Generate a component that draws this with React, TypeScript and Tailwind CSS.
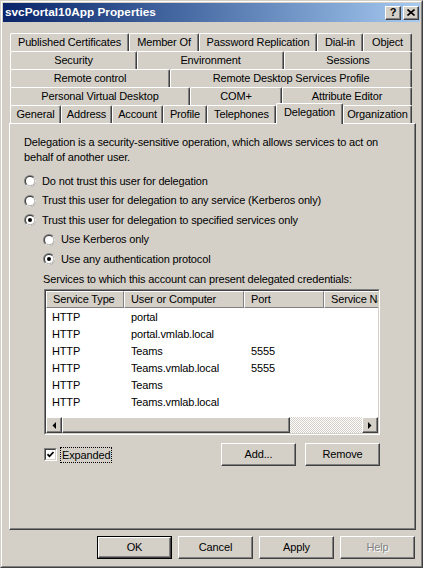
import React from "react";

type TabDef = { label: string; w: string; selected?: boolean };

const rows: TabDef[][] = [
  [
    { label: "Published Certificates", w: "w-[119px]" },
    { label: "Member Of", w: "w-[70px]" },
    { label: "Password Replication", w: "w-[118px]" },
    { label: "Dial-in", w: "w-[46px]" },
    { label: "Object", w: "w-[49px]" },
  ],
  [
    { label: "Security", w: "w-[127px]" },
    { label: "Environment", w: "w-[147px]" },
    { label: "Sessions", w: "w-[128px]" },
  ],
  [
    { label: "Remote control", w: "w-[160px]" },
    { label: "Remote Desktop Services Profile", w: "w-[242px]" },
  ],
  [
    { label: "Personal Virtual Desktop", w: "w-[180px]" },
    { label: "COM+", w: "w-[92px]" },
    { label: "Attribute Editor", w: "w-[130px]" },
  ],
  [
    { label: "General", w: "w-[51px]" },
    { label: "Address", w: "w-[51px]" },
    { label: "Account", w: "w-[51px]" },
    { label: "Profile", w: "w-[44px]" },
    { label: "Telephones", w: "w-[69px]" },
    { label: "Delegation", w: "w-[67px]", selected: true },
    { label: "Organization", w: "w-[69px]" },
  ],
];

const services = [
  ["HTTP", "portal", ""],
  ["HTTP", "portal.vmlab.local", ""],
  ["HTTP", "Teams", "5555"],
  ["HTTP", "Teams.vmlab.local", "5555"],
  ["HTTP", "Teams", ""],
  ["HTTP", "Teams.vmlab.local", ""],
];

const raised =
  "border border-t-white border-l-white border-b-[#404040] border-r-[#404040] bg-[#d4d0c8] shadow-[inset_-1px_-1px_0_#808080]";

function Radio({ checked }: { checked?: boolean }) {
  return (
    <svg width="12" height="12" viewBox="0 0 12 12" className="shrink-0">
      <circle cx="6" cy="6" r="6" fill="#808080" />
      <path d="M10.24 1.76 A6 6 0 0 1 1.76 10.24 Z" fill="#ffffff" />
      <circle cx="6" cy="6" r="5" fill="#404040" />
      <path d="M9.54 2.46 A5 5 0 0 1 2.46 9.54 Z" fill="#d4d0c8" />
      <circle cx="6" cy="6" r="4" fill="#ffffff" />
      {checked && <circle cx="6" cy="6" r="2" fill="#000000" />}
    </svg>
  );
}

function RadioRow({ label, checked, sub }: { label: string; checked?: boolean; sub?: boolean }) {
  return (
    <div className={`flex h-[16px] items-center gap-[6px] ${sub ? "ml-[19px]" : ""}`}>
      <Radio checked={checked} />
      <span>{label}</span>
    </div>
  );
}

function Button({ label, className = "", disabled, isDefault }: { label: string; className?: string; disabled?: boolean; isDefault?: boolean }) {
  const inner = (
    <div
      className={`flex h-full w-full items-center justify-center ${raised} ${
        disabled ? "text-[#808080] [text-shadow:1px_1px_0_#ffffff]" : ""
      }`}
    >
      {label}
    </div>
  );
  if (isDefault) {
    return <div className={`border border-black ${className}`}>{inner}</div>;
  }
  return <div className={className}>{inner}</div>;
}

function Arrow({ dir }: { dir: "left" | "right" }) {
  return (
    <div className={`flex h-[16px] w-[16px] shrink-0 items-center justify-center ${raised}`}>
      <svg width="4" height="7" viewBox="0 0 4 7">
        {dir === "left" ? <path d="M4 0 V7 L0.5 3.5 Z" fill="#000" /> : <path d="M0 0 V7 L3.5 3.5 Z" fill="#000" />}
      </svg>
    </div>
  );
}

export default function App() {
  return (
    <div className="h-[568px] w-[423px] border border-t-[#d4d0c8] border-l-[#d4d0c8] border-b-[#404040] border-r-[#404040] bg-[#d4d0c8] font-['Liberation_Sans',Arial,sans-serif] text-[11px] tracking-[-0.15px] text-black">
      <div className="flex h-full flex-col border border-t-white border-l-white border-b-[#808080] border-r-[#808080] p-[1px]">
        {/* Title bar */}
        <div className="flex h-[19px] shrink-0 items-center justify-between bg-linear-to-r from-[#0a246a] to-[#a6caf0] pl-[2px] pr-[1px]">
          <span className="text-[11.8px] font-bold tracking-normal text-white">svcPortal10App Properties</span>
          <div className="flex items-center gap-[2px]">
            <div className={`flex h-[14px] w-[16px] items-center justify-center ${raised} text-[11px] font-bold leading-none`}>?</div>
            <div className={`flex h-[14px] w-[16px] items-center justify-center ${raised}`}>
              <svg width="8" height="7" viewBox="0 0 8 7">
                <path d="M0.5 0.5 L7.5 6.5 M7.5 0.5 L0.5 6.5" stroke="#000" strokeWidth="1.6" />
              </svg>
            </div>
          </div>
        </div>

        {/* Tabs */}
        <div className="ml-[7px] mt-[11px] flex flex-col">
          {rows.map((row, i) => (
            <div key={i} className="flex h-[18px] items-start">
              {row.map((t) => (
                <div
                  key={t.label}
                  className={`${t.w} flex shrink-0 items-center justify-center rounded-t-[2px] border-t border-l border-r border-t-white border-l-white border-r-[#404040] bg-[#d4d0c8] shadow-[inset_-1px_0_0_#808080] ${
                    t.selected ? "relative z-10 -mt-[2px] h-[21px] pb-[3px]" : "h-[18px]"
                  }`}
                >
                  <span className="whitespace-nowrap">{t.label}</span>
                </div>
              ))}
            </div>
          ))}
        </div>

        {/* Panel */}
        <div className="relative ml-[6px] h-[407px] w-[407px] shrink-0 border border-t-white border-l-white border-b-[#404040] border-r-[#404040] pl-[14px] pt-[11px] shadow-[inset_-1px_-1px_0_#808080]">
          <p className="leading-[15px]">
            Delegation is a security-sensitive operation, which allows services to act on
            <br />
            behalf of another user.
          </p>

          <div className="mt-[8px] flex flex-col gap-[3.5px]">
            <RadioRow label="Do not trust this user for delegation" />
            <RadioRow label="Trust this user for delegation to any service (Kerberos only)" />
            <RadioRow label="Trust this user for delegation to specified services only" checked />
            <RadioRow label="Use Kerberos only" sub />
            <RadioRow label="Use any authentication protocol" sub checked />
          </div>

          <div className="ml-[19px] mt-[4px] flex h-[16px] items-center">Services to which this account can present delegated credentials:</div>

          {/* List view */}
          <div className="ml-[20px] mt-[2px] h-[146px] w-[336px] border border-t-[#808080] border-l-[#808080] border-b-white border-r-white">
            <div className="flex h-full w-full flex-col overflow-hidden border border-t-[#404040] border-l-[#404040] border-b-[#d4d0c8] border-r-[#d4d0c8] bg-white">
              <div className="flex h-[17px] shrink-0">
                {[
                  ["Service Type", "w-[78px]"],
                  ["User or Computer", "w-[120px]"],
                  ["Port", "w-[80px]"],
                  ["Service Name", "w-[90px]"],
                ].map(([h, w]) => (
                  <div
                    key={h}
                    className={`${w} flex shrink-0 items-center whitespace-nowrap border border-t-white border-l-white border-b-[#808080] border-r-[#808080] bg-[#d4d0c8] pl-[6px]`}
                  >
                    {h}
                  </div>
                ))}
              </div>
              <div className="flex-1 pt-[1px]">
                {services.map((s, i) => (
                  <div key={i} className="flex h-[17px] items-center">
                    <span className="w-[78px] shrink-0 pl-[6px]">{s[0]}</span>
                    <span className="w-[120px] shrink-0 pl-[7px]">{s[1]}</span>
                    <span className="w-[80px] shrink-0 pl-[7px]">{s[2]}</span>
                  </div>
                ))}
              </div>
              <div className="flex h-[16px] shrink-0">
                <Arrow dir="left" />
                <div className={`h-[16px] w-[228px] shrink-0 ${raised}`} />
                <div className="h-[16px] flex-1 bg-[repeating-conic-gradient(#d4d0c8_0%_25%,#ffffff_0%_50%)] bg-[length:2px_2px]" />
                <Arrow dir="right" />
              </div>
            </div>
          </div>

          <div className="ml-[20px] mt-[8px] flex h-[23px] w-[336px] items-center">
            <div className="h-[13px] w-[13px] shrink-0 border border-t-[#808080] border-l-[#808080] border-b-white border-r-white">
              <div className="flex h-full w-full items-center justify-center border border-t-[#404040] border-l-[#404040] border-b-[#d4d0c8] border-r-[#d4d0c8] bg-white">
                <svg width="7" height="7" viewBox="0 0 7 7">
                  <path d="M0.5 3.2 L2.5 5.3 L6.5 1" stroke="#000" strokeWidth="1.7" fill="none" />
                </svg>
              </div>
            </div>
            <span className="ml-[3px] border border-dotted border-black px-[1px] leading-[14px]">Expanded</span>
            <div className="ml-auto flex gap-[9px]">
              <Button label="Add..." className="h-[23px] w-[75px]" />
              <Button label="Remove" className="h-[23px] w-[75px]" />
            </div>
          </div>
        </div>

        {/* Dialog buttons */}
        <div className="mt-[6px] flex justify-end gap-[6px] pr-[5px]">
          <Button label="OK" className="h-[23px] w-[75px]" isDefault />
          <Button label="Cancel" className="h-[23px] w-[75px]" />
          <Button label="Apply" className="h-[23px] w-[75px]" />
          <Button label="Help" className="h-[23px] w-[75px]" disabled />
        </div>
      </div>
    </div>
  );
}
